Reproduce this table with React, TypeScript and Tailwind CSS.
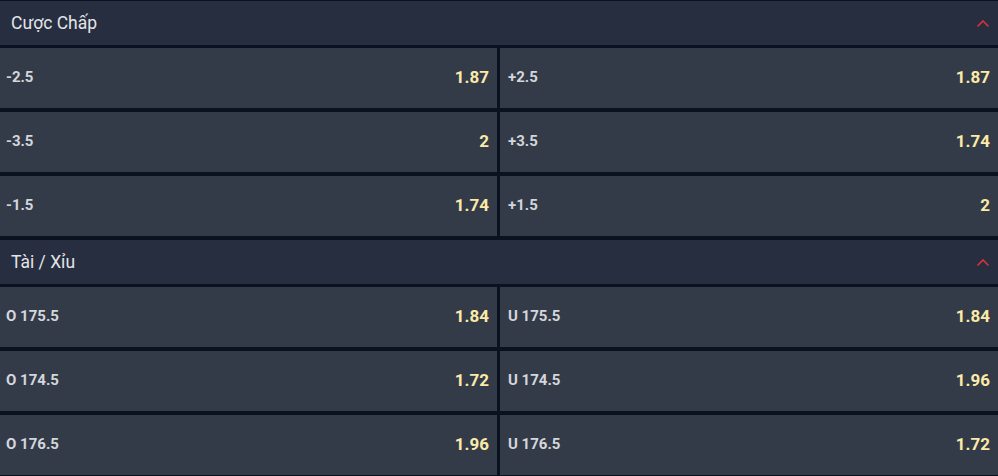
import React from 'react';

type Odd = { label: string; price: string };

interface Market {
  title: string;
  rows: [Odd, Odd][];
}

const markets: Market[] = [
  {
    title: 'Cược Chấp',
    rows: [
      [{ label: '-2.5', price: '1.87' }, { label: '+2.5', price: '1.87' }],
      [{ label: '-3.5', price: '2' }, { label: '+3.5', price: '1.74' }],
      [{ label: '-1.5', price: '1.74' }, { label: '+1.5', price: '2' }],
    ],
  },
  {
    title: 'Tài / Xỉu',
    rows: [
      [{ label: 'O 175.5', price: '1.84' }, { label: 'U 175.5', price: '1.84' }],
      [{ label: 'O 174.5', price: '1.72' }, { label: 'U 174.5', price: '1.96' }],
      [{ label: 'O 176.5', price: '1.96' }, { label: 'U 176.5', price: '1.72' }],
    ],
  },
];

const Chevron = () => (
  <svg width="14" height="9" viewBox="0 0 14 9" fill="none">
    <polyline points="1.5,7.5 7,2 12.5,7.5" stroke="#d5323c" strokeWidth="1.6" />
  </svg>
);

const OddCell: React.FC<{ odd: Odd; left?: boolean }> = ({ odd, left }) => (
  <div
    className={`h-[60px] bg-[#343b48] flex items-center justify-between pr-[8px] ${
      left ? 'pl-[6px]' : 'pl-[8px]'
    }`}
  >
    <span className="text-[15px] font-bold text-[#d3d6dc] mb-[2px]">{odd.label}</span>
    <span className="text-[17px] font-bold text-[#fbeaa8]">{odd.price}</span>
  </div>
);

export default function App() {
  return (
    <div
      className="w-[998px] h-[476px] bg-[#0a1222] pt-px flex flex-col overflow-hidden"
      style={{ fontFamily: 'Roboto, "Noto Sans", sans-serif' }}
    >
      {markets.map((m) => (
        <div key={m.title} className="flex flex-col">
          {/* Section header */}
          <div className="h-[44px] bg-[#272e3f] flex items-center justify-between pl-[11px] pr-[8px]">
            <span className="text-[17.5px] text-[#e3e5ea]">{m.title}</span>
            <Chevron />
          </div>
          <div className="flex flex-col gap-[4px] pt-[3px] pb-[4px]">
            {m.rows.map((r, i) => (
              <div key={i} className="grid grid-cols-[497px_1fr] gap-[3px]">
                <OddCell odd={r[0]} left />
                <OddCell odd={r[1]} />
              </div>
            ))}
          </div>
        </div>
      ))}
    </div>
  );
}
